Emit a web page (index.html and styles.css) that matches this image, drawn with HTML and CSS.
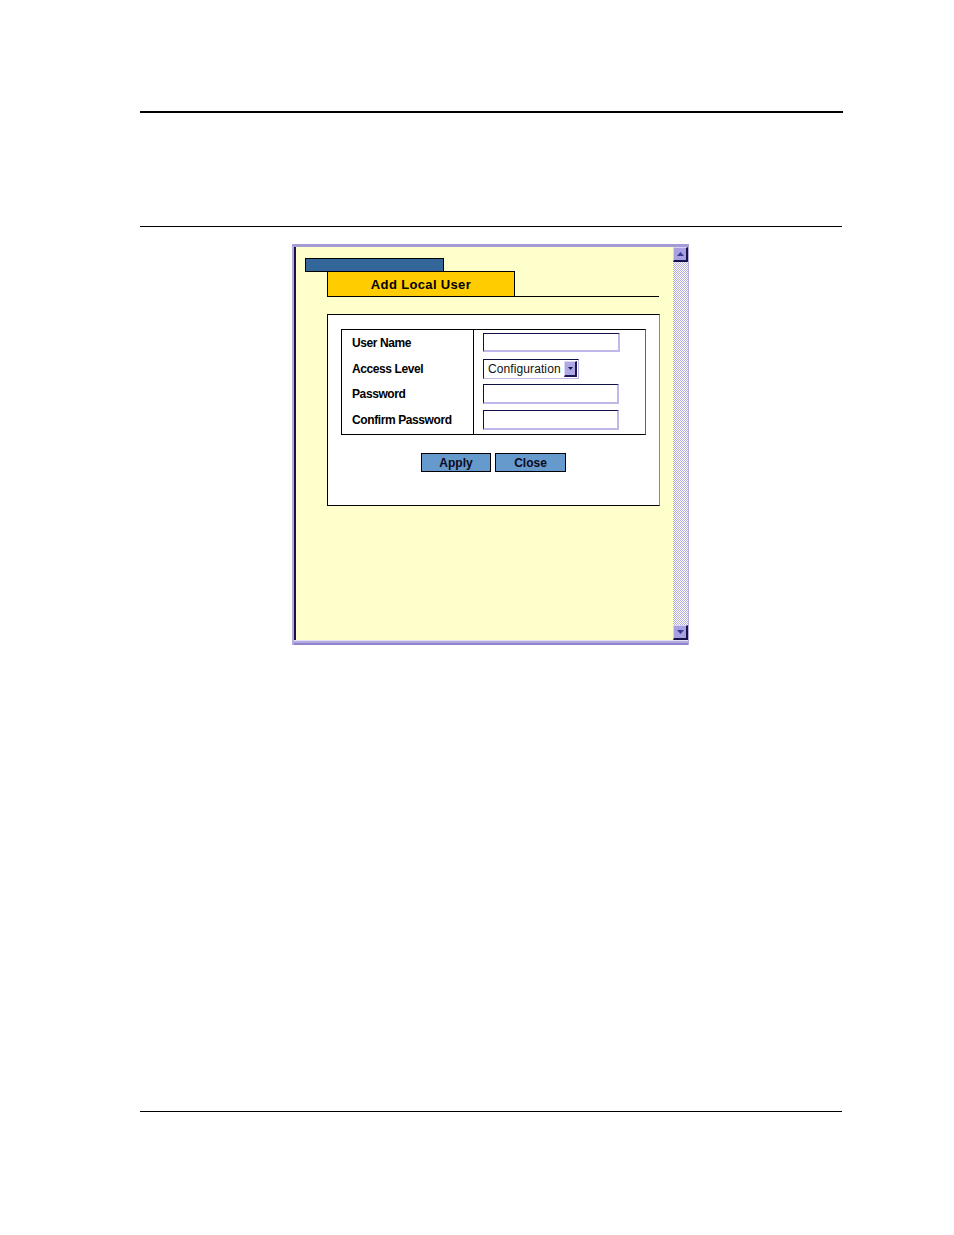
FILE: index.html
```html
<!DOCTYPE html>
<html>
<head>
<meta charset="utf-8">
<link rel="stylesheet" href="styles.css">
</head>
<body>
<div class="page">
  <div class="rule-top"></div>
  <div class="rule-mid"></div>
  <div class="frame">
    <div class="viewport">
      <div class="tab-blue"></div>
      <div class="tab-row">
        <div class="tab-yellow">Add Local User</div>
        <div class="tab-line"></div>
      </div>
      <div class="panel">
        <div class="form">
          <div class="labels">
            <div class="label">User Name</div>
            <div class="label">Access Level</div>
            <div class="label">Password</div>
            <div class="label">Confirm Password</div>
          </div>
          <div class="fields">
            <div class="field"><div class="input"></div></div>
            <div class="field">
              <div class="select">
                <span class="select-text">Configuration</span>
                <span class="select-btn"><svg width="5" height="3" viewBox="0 0 5 3"><path d="M0 0H5L2.5 3Z" fill="#1a1a50"/></svg></span>
              </div>
            </div>
            <div class="field"><div class="input narrow"></div></div>
            <div class="field"><div class="input narrow"></div></div>
          </div>
        </div>
        <div class="buttons">
          <div class="btn apply">Apply</div>
          <div class="btn close">Close</div>
        </div>
      </div>
    </div>
    <div class="scrollbar">
      <div class="sb-btn"><svg width="7" height="4" viewBox="0 0 7 4"><path d="M3.5 0L7 4H0Z" fill="#3a3a90"/></svg></div>
      <div class="sb-track"></div>
      <div class="sb-btn down"><svg width="7" height="4" viewBox="0 0 7 4"><path d="M0 0H7L3.5 4Z" fill="#3a3a90"/></svg></div>
    </div>
    <div class="hbar"></div>
  </div>
  <div class="rule-bottom"></div>
</div>
</body>
</html>
```
FILE: styles.css
```css
html, body {
  margin: 0;
  padding: 0;
  background: #fff;
}
.page {
  padding-left: 140px;
  width: 703px;
  font-family: "Liberation Sans", Arial, sans-serif;
  color: #000;
}
.rule-top {
  margin-top: 111px;
  height: 2px;
  background: #000;
  width: 703px;
}
.rule-mid {
  margin-top: 113px;
  height: 1px;
  background: #000;
  width: 702px;
}
.frame {
  margin-top: 17px;
  margin-left: 152px;
  width: 397px;
  height: 401px;
  box-sizing: border-box;
  border-top: 3px solid #a49ad6;
  border-left: 2px solid #b4acdf;
  border-right: 1px solid #b4acdf;
  display: grid;
  grid-template-columns: 1fr 15px;
  grid-template-rows: 1fr 5px;
}
.viewport {
  background: #ffffcc;
  border-left: 2px solid #14144a;
  padding: 11px 0 0 9px;
}
.tab-blue {
  width: 139px;
  height: 14px;
  box-sizing: border-box;
  background: #336699;
  border: 1px solid #000;
}
.tab-row {
  margin-left: 22px;
  margin-top: -1px;
  width: 332px;
  display: flex;
  align-items: flex-end;
}
.tab-yellow {
  width: 188px;
  height: 26px;
  box-sizing: border-box;
  background: #ffcc00;
  border: 1px solid #000;
  font-weight: bold;
  font-size: 13px;
  letter-spacing: 0.35px;
  display: flex;
  align-items: center;
  justify-content: center;
  padding-top: 1px;
}
.tab-line {
  flex: 1;
  border-bottom: 1px solid #000;
}
.panel {
  margin-top: 17px;
  margin-left: 22px;
  width: 333px;
  height: 192px;
  box-sizing: border-box;
  background: #fff;
  border: 1px solid #000;
  border-right-color: #888;
  padding: 14px 0 0 13px;
}
.form {
  width: 305px;
  height: 106px;
  box-sizing: border-box;
  border: 1px solid #000;
  border-right-color: #666;
  display: flex;
}
.labels {
  width: 132px;
  border-right: 1px solid #000;
  padding: 6px 0 0 10px;
  box-sizing: border-box;
}
.label {
  height: 25.5px;
  font-size: 12px;
  font-weight: bold;
  line-height: 15px;
  letter-spacing: -0.4px;
}
.fields {
  padding: 3px 0 0 9px;
}
.field {
  height: 25.5px;
}
.input {
  width: 137px;
  height: 19px;
  box-sizing: border-box;
  background: #fff;
  border-top: 1px solid #0e0e48;
  border-left: 1px solid #0e0e48;
  border-right: 2px solid #c0b8e8;
  border-bottom: 2px solid #c0b8e8;
}
.input.narrow {
  width: 136px;
  height: 20px;
}
.select {
  width: 96px;
  height: 20px;
  box-sizing: border-box;
  border-top: 1px solid #0e0e48;
  border-left: 1px solid #0e0e48;
  border-right: 1px solid #c0b8e8;
  border-bottom: 1px solid #c0b8e8;
  background: #fff;
  display: flex;
  align-items: center;
  justify-content: space-between;
  padding: 0 1px 0 4px;
}
.select-text {
  font-size: 12px;
  color: #111;
  letter-spacing: 0.1px;
}
.select-btn {
  width: 13px;
  height: 16px;
  box-sizing: border-box;
  background: #b0a8e4;
  border-top: 1px solid #dcd8f6;
  border-left: 1px solid #dcd8f6;
  border-right: 2px solid #1a1a50;
  border-bottom: 2px solid #1a1a50;
  display: flex;
  align-items: center;
  justify-content: center;
}
.buttons {
  margin-top: 18px;
  margin-left: -13px;
  display: flex;
  justify-content: center;
  gap: 4px;
}
.btn {
  height: 19px;
  box-sizing: border-box;
  background: #6699cc;
  border: 1px solid #000;
  font-size: 12px;
  font-weight: bold;
  display: flex;
  align-items: center;
  justify-content: center;
  color: #0a0a20;
}
.btn.apply { width: 70px; }
.btn.close { width: 71px; }
.scrollbar {
  display: flex;
  flex-direction: column;
  background: #fff;
}
.sb-btn {
  height: 15px;
  box-sizing: border-box;
  background: #a8a0e0;
  border-top: 1px solid #d8d4f4;
  border-left: 1px solid #d8d4f4;
  border-right: 2px solid #14144a;
  border-bottom: 2px solid #14144a;
  display: flex;
  align-items: center;
  justify-content: center;
}
.sb-track {
  flex: 1;
  background-color: #fff;
  background-image: repeating-conic-gradient(#b4aee0 0 25%, #ffffff 0 50%);
  background-size: 2px 2px;
}
.hbar {
  grid-column: 1 / 3;
  background: #b4acdf;
  border-top: 1px solid #e4e0f6;
  border-bottom: 2px solid #8c84cc;
}
.rule-bottom {
  margin-top: 466px;
  height: 1px;
  background: #000;
  width: 702px;
}
```
